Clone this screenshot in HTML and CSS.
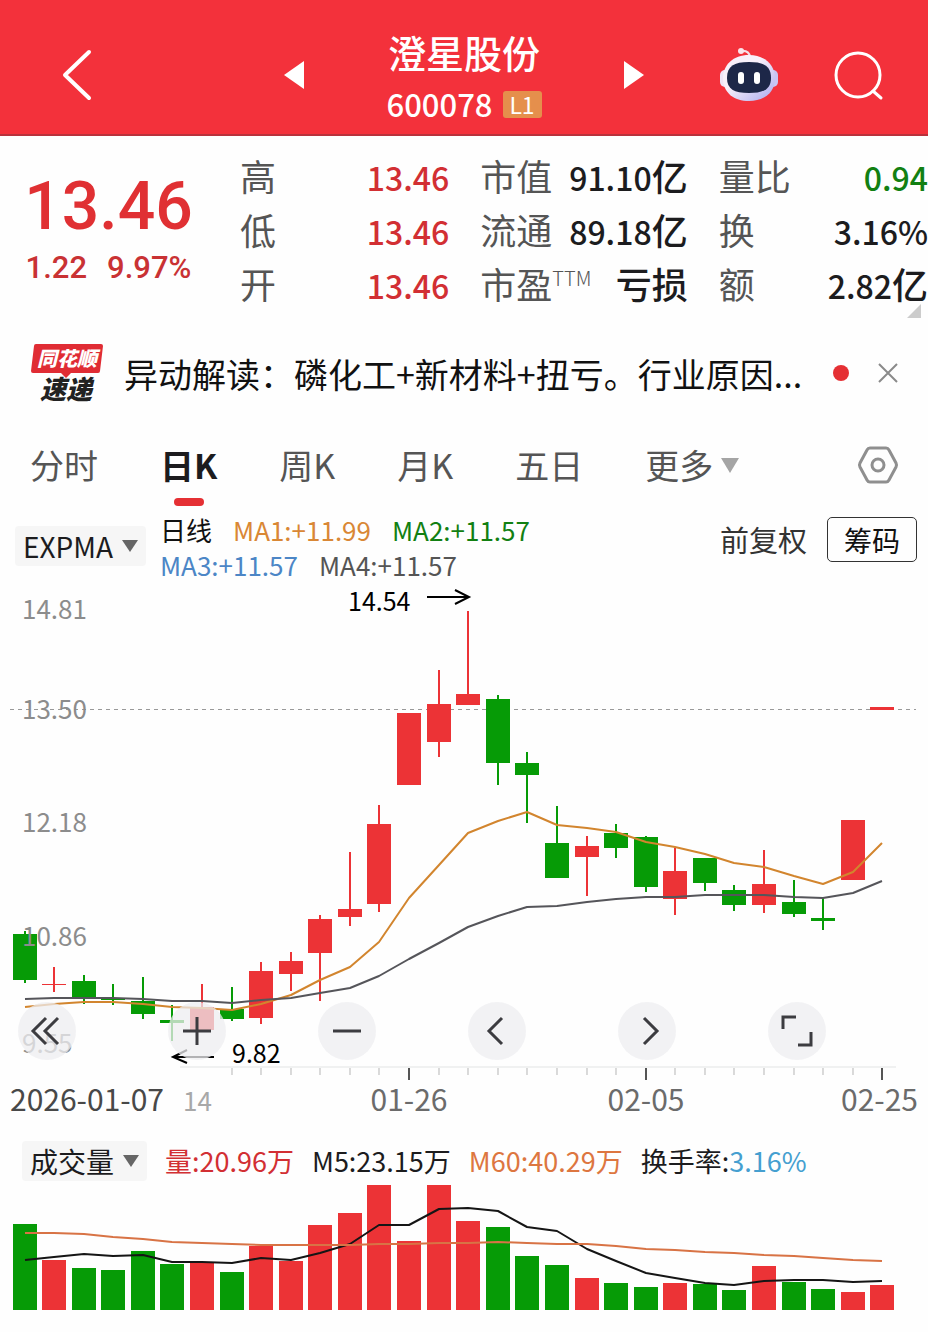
FILE: index.html
```html
<!DOCTYPE html>
<html lang="zh">
<head>
    <meta charset="UTF-8">
    <meta name="viewport" content="width=device-width, initial-scale=1.0">
    <title>澄星股份 600078</title>
    <link rel="stylesheet" href="styles.css">
</head>
<body>
    <header class="topbar">
        <button class="icon-btn back" aria-label="返回">
            <svg width="32" height="52" viewBox="0 0 32 52"><path d="M28 3 L4 26 L28 49" fill="none" stroke="#fff" stroke-width="4" stroke-linecap="round" stroke-linejoin="round"/></svg>
        </button>
        <div class="stock-nav">
            <button class="icon-btn" aria-label="上一只">
                <svg width="20" height="28" viewBox="0 0 20 28"><path d="M20 0 V28 L0 14 Z" fill="#fff"/></svg>
            </button>
            <div class="stock">
                <h1>澄星股份</h1>
                <div class="code">600078 <span class="level">L1</span></div>
            </div>
            <button class="icon-btn" aria-label="下一只">
                <svg width="20" height="28" viewBox="0 0 20 28"><path d="M0 0 V28 L20 14 Z" fill="#fff"/></svg>
            </button>
        </div>
        <div class="actions">
            <button class="icon-btn" aria-label="智能助手">
                <svg width="60" height="56" viewBox="0 0 60 56">
                    <defs>
                        <linearGradient id="shell" x1="0" y1="0" x2="1" y2="1">
                            <stop offset="0.4" stop-color="#f8f0fa"/>
                            <stop offset="1" stop-color="#a9a8ee"/>
                        </linearGradient>
                    </defs>
                    <path d="M22 4 Q30 3 31 10" fill="none" stroke="#f6dfe8" stroke-width="2"/>
                    <circle cx="22" cy="4" r="3" fill="#fbe3ea"/>
                    <rect x="1" y="23" width="10" height="17" rx="5" fill="#efe4f6"/>
                    <rect x="49" y="23" width="10" height="17" rx="5" fill="#c9c5f3"/>
                    <path d="M30 8 C46 8 56 18 56 31 C56 46 45 54 30 54 C15 54 4 46 4 31 C4 18 14 8 30 8 Z" fill="url(#shell)"/>
                    <path d="M30 15 C45 15 52 19 52 31 C52 42 45 46 30 46 C15 46 8 42 8 31 C8 19 15 15 30 15 Z" fill="#1d2748"/>
                    <rect x="19" y="25" width="6" height="12" rx="3" fill="#fff"/>
                    <rect x="35" y="25" width="6" height="12" rx="3" fill="#fff"/>
                </svg>
            </button>
            <button class="icon-btn" aria-label="搜索">
                <svg width="50" height="50" viewBox="0 0 50 50"><g fill="none" stroke="#fff" stroke-width="3" stroke-linecap="round"><circle cx="24" cy="25" r="22"/><path d="M39 41 L47 48"/></g></svg>
            </button>
        </div>
    </header>

    <section class="quote">
        <div class="price">
            <div class="now">13.46</div>
            <div class="change"><span>1.22</span><span>9.97%</span></div>
        </div>
        <dl>
            <div><dt>高</dt><dd class="red">13.46</dd></div>
            <div><dt>低</dt><dd class="red">13.46</dd></div>
            <div><dt>开</dt><dd class="red">13.46</dd></div>
        </dl>
        <dl>
            <div><dt>市值</dt><dd>91.10<span>亿</span></dd></div>
            <div><dt>流通</dt><dd>89.18<span>亿</span></dd></div>
            <div><dt>市盈<sup>TTM</sup></dt><dd><span>亏损</span></dd></div>
        </dl>
        <dl>
            <div><dt>量比</dt><dd class="green">0.94</dd></div>
            <div><dt>换</dt><dd>3.16%</dd></div>
            <div><dt>额</dt><dd>2.82<span>亿</span></dd></div>
        </dl>
        <span class="corner"></span>
    </section>

    <section class="news">
        <svg class="logo" width="74" height="62" viewBox="0 0 74 62">
            <path d="M6 2 H71 Q73 2 73 4 L70 29 Q70 31 68 31 H41 L36 36 L31 31 H3 Q1 31 1 29 L4 4 Q4 2 6 2 Z" fill="#e02c34"/>
            <text class="logo-top" x="37" y="24">同花顺</text>
            <text class="logo-bottom" x="36" y="57">速递</text>
        </svg>
        <a href="#">异动解读：磷化工+新材料+扭亏。行业原因...</a>
        <span class="dot"></span>
        <button class="icon-btn" aria-label="关闭">
            <svg width="22" height="22" viewBox="0 0 22 22"><path d="M2 2 L20 20 M20 2 L2 20" stroke="#8a8a8a" stroke-width="2"/></svg>
        </button>
    </section>

    <nav class="tabs">
        <button>分时</button>
        <button class="active">日K</button>
        <button>周K</button>
        <button>月K</button>
        <button>五日</button>
        <button>更多<svg width="18" height="16" viewBox="0 0 18 16"><path d="M0 1 H18 L9 16 Z" fill="#a5a5a5"/></svg></button>
        <button class="settings" aria-label="设置">
            <svg width="40" height="40" viewBox="0 0 40 40"><g fill="none" stroke="#8f8f8f" stroke-width="3" stroke-linejoin="round"><path d="M12 3 H28 Q30 3 31 5 L38 18 Q39 20 38 22 L31 35 Q30 37 28 37 H12 Q10 37 9 35 L2 22 Q1 20 2 18 L9 5 Q10 3 12 3 Z"/><circle cx="20" cy="20" r="6"/></g></svg>
        </button>
    </nav>

    <section class="indicator">
        <label class="dropdown">
            <select aria-label="主图指标"><option>EXPMA</option></select>
            <svg width="16" height="12" viewBox="0 0 16 12"><path d="M0 0 H16 L8 12 Z" fill="#666"/></svg>
        </label>
        <div class="ma">
            <div><span>日线</span><span class="ma1">MA1:+11.99</span><span class="ma2">MA2:+11.57</span></div>
            <div><span class="ma3">MA3:+11.57</span><span class="ma4">MA4:+11.57</span></div>
        </div>
        <span class="adjust">前复权</span>
        <button class="chips">筹码</button>
    </section>

    <section class="chart">
        <svg viewBox="0 584 928 540">
            <line class="dash" x1="10" y1="709.5" x2="916" y2="709.5"/>
            <g class="scale">
                <text x="22" y="619">14.81</text>
                <text x="22" y="719">13.50</text>
                <text x="22" y="832">12.18</text>
                <text x="22" y="1053">9.55</text>
            </g>
            <g id="candles"></g>
            <g class="scale"><text x="22" y="946">10.86</text></g>
            <path id="line-fast" class="line fast"/>
            <path id="line-slow" class="line slow"/>
            <g class="mark">
                <text x="348" y="611">14.54</text>
                <path d="M427 597 H469 M455 590 L469 597 L455 604"/>
                <text x="232" y="1063">9.82</text>
                <path d="M214 1057 H173 M187 1050 L173 1057 L187 1063"/>
            </g>
            <line class="axis" x1="180" y1="1067" x2="896" y2="1067"/>
            <g id="ticks"></g>
            <g class="dates">
                <text class="first" x="10" y="1111">2026-01-07</text>
                <text class="faint" x="183" y="1111">14</text>
                <text class="mid" x="409" y="1111">01-26</text>
                <text class="mid" x="646" y="1111">02-05</text>
                <text class="end" x="918" y="1111">02-25</text>
            </g>
        </svg>
        <div class="tools">
            <button aria-label="最早"><svg viewBox="0 0 58 58"><path d="M28 16 L15 29 L28 42 M40 16 L27 29 L40 42"/></svg></button>
            <button aria-label="放大"><svg viewBox="0 0 58 58"><path d="M15 29 H43 M29 15 V43"/></svg></button>
            <button aria-label="缩小"><svg viewBox="0 0 58 58"><path d="M15 29 H43"/></svg></button>
            <button aria-label="左移"><svg viewBox="0 0 58 58"><path d="M34 16 L21 29 L34 42"/></svg></button>
            <button aria-label="右移"><svg viewBox="0 0 58 58"><path d="M26 16 L39 29 L26 42"/></svg></button>
            <button aria-label="全屏"><svg viewBox="0 0 58 58"><path d="M15 27 V15 H28 M43 30 V43 H30"/></svg></button>
        </div>
    </section>

    <section class="volume-info">
        <label class="dropdown">
            <select aria-label="副图指标"><option>成交量</option></select>
            <svg width="16" height="12" viewBox="0 0 16 12"><path d="M0 0 H16 L8 12 Z" fill="#666"/></svg>
        </label>
        <span class="red">量:20.96万</span>
        <span>M5:23.15万</span>
        <span class="m60">M60:40.29万</span>
        <span>换手率:<span class="rate">3.16%</span></span>
    </section>
    <section class="volume">
        <svg viewBox="0 1180 928 132">
            <g id="bars"></g>
            <path id="line-m5" class="line m5"/>
            <path id="line-m60" class="line m60"/>
        </svg>
    </section>
    <script src="chart.js"></script>
</body>
</html>
```
FILE: chart.js
```js
// [up?, body top, body bottom, high, low, volume top]
const days = [
    [0, 934, 980, 931, 983, 1224],
    [1, 984, 985, 967, 992, 1260],
    [0, 981, 998, 975, 1004, 1268],
    [0, 998, 1000, 984, 1005, 1270],
    [0, 1001, 1014, 977, 1019, 1251],
    [0, 1020, 1023, 1005, 1041, 1264],
    [1, 1007, 1030, 984, 1030, 1262],
    [0, 1009, 1019, 987, 1021, 1272],
    [1, 971, 1018, 962, 1024, 1246],
    [1, 961, 974, 952, 991, 1261],
    [1, 919, 953, 915, 1001, 1225],
    [1, 909, 917, 852, 926, 1213],
    [1, 824, 904, 805, 912, 1185],
    [1, 713, 785, 713, 785, 1241],
    [1, 704, 742, 670, 757, 1185],
    [1, 694, 705, 611, 705, 1221],
    [0, 699, 763, 695, 785, 1227],
    [0, 763, 775, 752, 823, 1256],
    [0, 843, 878, 806, 878, 1265],
    [1, 846, 857, 836, 896, 1278],
    [0, 833, 848, 824, 858, 1283],
    [0, 837, 887, 836, 892, 1287],
    [1, 871, 899, 848, 915, 1283],
    [0, 858, 883, 858, 891, 1284],
    [0, 890, 905, 885, 911, 1290],
    [1, 884, 905, 850, 913, 1266],
    [0, 902, 914, 880, 917, 1282],
    [0, 918, 921, 898, 930, 1289],
    [1, 820, 880, 820, 880, 1292],
    [1, 707, 710, 707, 710, 1285]
];
const fast = [1007, 1004, 1002, 1002, 1004, 1007, 1008, 1010, 1004, 995, 980, 967, 942, 898, 865, 833, 821, 812, 825, 828, 832, 842, 847, 854, 863, 867, 876, 884, 872, 843];
const slow = [999, 998, 998, 998, 999, 1001, 1001, 1003, 1000, 998, 993, 988, 976, 959, 943, 927, 916, 907, 906, 902, 899, 897, 897, 895, 895, 895, 897, 898, 893, 881];
const m5 = [1260, 1257, 1254, 1256, 1255, 1262, 1262, 1263, 1258, 1260, 1253, 1244, 1225, 1225, 1209, 1208, 1211, 1227, 1231, 1249, 1261, 1273, 1278, 1283, 1285, 1281, 1280, 1280, 1282, 1281];
const m60 = [1233, 1233, 1234, 1237, 1239, 1242, 1243, 1244, 1245, 1245, 1245, 1245, 1244, 1244, 1243, 1243, 1242, 1243, 1244, 1244, 1246, 1249, 1250, 1252, 1253, 1255, 1256, 1258, 1260, 1261];

const base = 1310;
const centerX = i => 24.5 + i * 29.58;

let candles = '';
let bars = '';
let ticks = '';
days.forEach(([up, top, bottom, high, low, vol], i) => {
    const x = Math.round(centerX(i));
    const cls = up ? 'up' : 'down';
    candles += `<g class="${cls}"><rect x="${x - 1}" y="${high}" width="2" height="${low - high}"/>`;
    candles += `<rect x="${x - 12}" y="${top}" width="24" height="${bottom - top}"/></g>`;
    bars += `<rect class="${cls}" x="${x - 12}" y="${vol}" width="24" height="${base - vol}"/>`;
    if (i >= 7) {
        const major = [13, 21, 29].includes(i);
        ticks += `<line class="${major ? 'major' : 'minor'}" x1="${x}" y1="1068" x2="${x}" y2="${major ? 1080 : 1075}"/>`;
    }
});
document.getElementById('candles').innerHTML = candles;
document.getElementById('bars').innerHTML = bars;
document.getElementById('ticks').innerHTML = ticks;

function drawLine(id, values) {
    const points = values.map((y, i) => Math.round(centerX(i)) + ' ' + y);
    document.getElementById(id).setAttribute('d', 'M' + points.join(' L'));
}
drawLine('line-fast', fast);
drawLine('line-slow', slow);
drawLine('line-m5', m5);
drawLine('line-m60', m60);
```
FILE: styles.css
```css
* {
    box-sizing: border-box;
}
body {
    margin: 0;
    background: #fefefe;
    color: #1c1c1e;
    font-family: "Noto Sans CJK SC", "Noto Sans", sans-serif;
}
button, select {
    font: inherit;
    color: inherit;
    background: none;
    border: none;
    padding: 0;
    cursor: pointer;
}
svg {
    display: block;
    overflow: visible;
}
h1, dl, dd {
    margin: 0;
}
.red { color: #d22f33; }
.green { color: #128012; }

.topbar {
    display: grid;
    grid-template-columns: 1fr 360px 1fr;
    align-items: center;
    height: 136px;
    padding-top: 16px;
    background: #f3313b;
    border-bottom: 2px solid #b8323c;
    color: #fff;
}
.back {
    justify-self: start;
    margin-left: 61px;
}
.stock-nav {
    display: flex;
    align-items: center;
    justify-content: space-between;
}
.stock {
    padding-top: 6px;
    text-align: center;
}
.stock h1 {
    font-size: 38px;
    line-height: 52px;
    font-weight: 500;
}
.code {
    display: flex;
    align-items: center;
    gap: 10px;
    font-size: 31px;
    line-height: 52px;
    font-weight: 500;
}
.level {
    width: 39px;
    background: #e58f4c;
    border-radius: 3px;
    font-size: 23px;
    line-height: 27px;
    font-weight: 400;
}
.actions {
    display: flex;
    align-items: center;
    justify-content: flex-end;
    gap: 55px;
    padding-right: 44px;
}

.quote {
    position: relative;
    display: grid;
    grid-template-columns: 209px 209fr 207fr 209fr;
    column-gap: 31px;
    padding: 12px 0 26px;
}
.price {
    padding: 20px 0 0 8px;
    color: #e03033;
    font-family: Roboto, "Noto Sans", sans-serif;
    text-align: center;
    font-weight: 500;
}
.now {
    font-size: 66px;
    line-height: 78px;
}
.change {
    display: flex;
    justify-content: center;
    gap: 20px;
    font-size: 31px;
    line-height: 44px;
    color: #c93234;
}
.quote dl div {
    display: flex;
    align-items: baseline;
    justify-content: space-between;
    height: 54px;
    line-height: 54px;
}
.quote dt {
    font-size: 36px;
    color: #555;
    white-space: nowrap;
}
.quote sup {
    font-size: 20px;
    font-weight: 300;
    line-height: 20px;
}
.quote dd {
    font-size: 32px;
    font-weight: 500;
    white-space: nowrap;
}
.quote dd span {
    font-size: 36px;
}
.corner {
    position: absolute;
    right: 7px;
    bottom: 18px;
    border-left: 14px solid transparent;
    border-bottom: 14px solid #ccc;
}

.news {
    display: flex;
    align-items: center;
    height: 74px;
    padding: 0 29px 0 30px;
    font-size: 34px;
}
.news a {
    flex: 1;
    margin-left: 20px;
    color: #111;
    text-decoration: none;
    white-space: nowrap;
}
.logo text {
    text-anchor: middle;
    font-weight: 900;
    font-style: italic;
}
.logo-top {
    font-size: 20px;
    fill: #fff;
}
.logo-bottom {
    font-size: 26px;
    fill: #222;
}
.dot {
    width: 16px;
    height: 16px;
    margin-right: 28px;
    border-radius: 50%;
    background: #e53034;
}

.tabs {
    display: flex;
    gap: 62px;
    padding: 24px 30px 0;
    font-size: 34px;
    line-height: 60px;
    color: #555;
}
.tabs button {
    display: flex;
    align-items: center;
    gap: 8px;
    height: 78px;
    padding-bottom: 16px;
    white-space: nowrap;
}
.tabs .active {
    position: relative;
    color: #1c1c1e;
    font-weight: 700;
}
.tabs .active::after {
    content: "";
    position: absolute;
    left: 50%;
    bottom: 6px;
    width: 30px;
    height: 8px;
    margin-left: -15px;
    border-radius: 4px;
    background: #e53034;
}
.tabs .settings {
    margin-left: auto;
}

.indicator {
    display: flex;
    align-items: flex-start;
    height: 72px;
    padding: 0 11px 0 15px;
    font-size: 28px;
    color: #333;
}
.dropdown {
    position: relative;
    border-radius: 4px;
    background: #f6f6f6;
    font-size: 28px;
    line-height: 40px;
    color: #1c1c1e;
}
.indicator .dropdown {
    margin-top: 14px;
}
.dropdown select {
    display: block;
    appearance: none;
    padding: 0 32px 0 8px;
}
.dropdown svg {
    position: absolute;
    right: 8px;
    top: 14px;
    pointer-events: none;
}
.ma {
    margin-left: 14px;
    font-size: 26px;
    line-height: 35px;
    color: #111;
}
.ma div {
    display: flex;
    gap: 21px;
}
.ma1 { color: #d98735; }
.ma2 { color: #128012; }
.ma3 { color: #4c86c6; }
.ma4 { color: #555; }
.adjust {
    margin: 5px 0 0 auto;
    font-size: 29px;
    line-height: 45px;
}
.chips {
    width: 90px;
    height: 45px;
    margin: 5px 0 0 20px;
    border: 1px solid #333;
    border-radius: 5px;
    line-height: 40px;
    color: #111;
}

.chart {
    position: relative;
}
.chart > svg, .volume > svg {
    width: 100%;
    height: auto;
}
.scale {
    font-size: 26px;
    fill: #8c8c8c;
}
.dash {
    stroke: #999;
    stroke-dasharray: 4 4;
}
.up { fill: #ec3336; }
.down { fill: #069b06; }
.line {
    fill: none;
    stroke-width: 2;
    stroke-linejoin: round;
}
.fast { stroke: #d2852e; }
.slow { stroke: #55555a; }
.m5 { stroke: #151515; }
.line.m60 { stroke: #d87345; }
.mark text {
    font-size: 25px;
    fill: #000;
}
.mark path {
    fill: none;
    stroke: #000;
    stroke-width: 2;
}
.axis { stroke: #e2e4e4; }
.minor { stroke: #b5b5b5; }
.major {
    stroke: #555;
    stroke-width: 2;
}
.dates {
    font-size: 30px;
    fill: #6b6b6b;
}
.dates .first { fill: #484848; }
.dates .faint {
    fill: #a8a8a8;
    font-size: 26px;
}
.dates .mid { text-anchor: middle; }
.dates .end { text-anchor: end; }
.tools {
    position: absolute;
    left: 18px;
    bottom: 64px;
    display: flex;
    gap: 92px;
}
.tools button {
    width: 58px;
    height: 58px;
    border-radius: 50%;
    background: rgba(238, 238, 240, 0.75);
}
.tools path {
    fill: none;
    stroke: #3c3c40;
    stroke-width: 3;
}

.volume-info {
    display: flex;
    align-items: center;
    gap: 18px;
    height: 56px;
    padding: 18px 20px 0 22px;
    font-size: 27px;
    line-height: 38px;
    white-space: nowrap;
}
.volume-info .m60 { color: #dd7640; }
.rate { color: #459fd0; }
.volume {
    padding-bottom: 20px;
}
```
